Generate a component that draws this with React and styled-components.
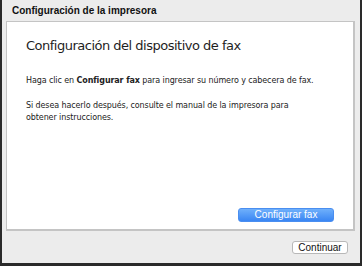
import styled, { createGlobalStyle } from 'styled-components';

const GlobalStyle = createGlobalStyle`
  html, body {
    margin: 0;
    padding: 0;
    background: #ececec;
  }
  * {
    box-sizing: border-box;
  }
`;

function App() {
  return (
    <>
      <GlobalStyle />
      <Window>
        <TitleBar>Configuración de la impresora</TitleBar>
        <Panel>
          <Heading>Configuración del dispositivo de fax</Heading>
          <Text>
            Haga clic en <strong>Configurar fax</strong> para ingresar su número y cabecera de fax.
          </Text>
          <Text>
            Si desea hacerlo después, consulte el manual de la impresora para
            <br />
            obtener instrucciones.
          </Text>
          <PanelFooter>
            <PrimaryButton>Configurar fax</PrimaryButton>
          </PanelFooter>
        </Panel>
        <Footer>
          <Button>Continuar</Button>
        </Footer>
      </Window>
    </>
  );
}

const Window = styled.div`
  width: 362px;
  height: 266px;
  display: flex;
  flex-direction: column;
  background: #ececec;
  border-left: 2px solid #2a2a2a;
  border-right: 2px solid #2a2a2a;
  border-bottom: 3px solid #2a2a2a;
  font-family: 'DejaVu Sans', sans-serif;
  color: #222;
`;

const TitleBar = styled.div`
  height: 21px;
  padding: 5px 0 0 10px;
  font-family: 'Liberation Sans', sans-serif;
  font-size: 10px;
  font-weight: bold;
  color: #111;
`;

const Panel = styled.div`
  margin: 0 5px 0 4px;
  height: 210px;
  background: #fff;
  border: 1px solid #c4c4c4;
  border-width: 1px 2px 2px 1px;
  padding: 16px 19px 7px 19px;
  display: flex;
  flex-direction: column;
`;

const Heading = styled.h1`
  margin: 0 0 21px;
  font-size: 13px;
  line-height: 16px;
  letter-spacing: -0.5px;
  font-weight: normal;
  color: #1e1e1e;
`;

const Text = styled.p`
  margin: 0 0 13px;
  font-size: 8px;
  line-height: 12px;
  letter-spacing: -0.1px;
  color: #222;

  strong {
    font-weight: bold;
  }
`;

const PanelFooter = styled.div`
  margin-top: auto;
  display: flex;
  justify-content: flex-end;
`;

const PrimaryButton = styled.button`
  width: 96px;
  height: 14px;
  padding: 0;
  border: 1px solid #4a8ef0;
  border-radius: 3px;
  background: linear-gradient(#6fb0fb, #3a86f3);
  color: #fff;
  font-family: 'Liberation Sans', sans-serif;
  font-size: 10px;
  line-height: 12px;
`;

const Footer = styled.div`
  flex: 1;
  display: flex;
  justify-content: flex-end;
  align-items: flex-start;
  padding: 10px 12px 0 0;
`;

const Button = styled.button`
  width: 56px;
  height: 13px;
  padding: 0;
  border: 1px solid #b8b8b8;
  border-radius: 3px;
  background: #fff;
  color: #111;
  font-family: 'Liberation Sans', sans-serif;
  font-size: 10px;
  line-height: 11px;
`;

export default App;
